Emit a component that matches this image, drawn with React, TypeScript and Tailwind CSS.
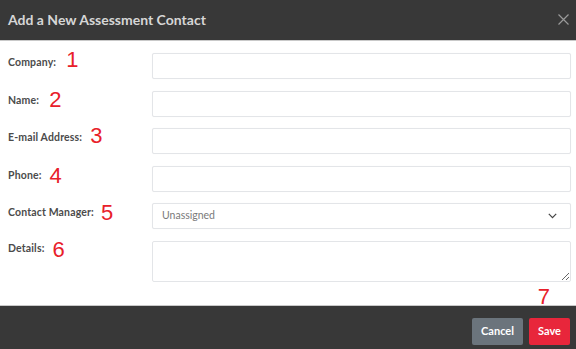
import React from "react";

const numFont = { fontFamily: '"Liberation Sans", Arial, sans-serif' };

const Num = ({ n, className = "" }: { n: string; className?: string }) => (
  <span className={`relative text-[22px] leading-none text-[#e8202a] ${className}`} style={numFont}>
    {n}
  </span>
);

const Label = ({ text, num, numClass = "", ml }: { text: string; num: string; numClass?: string; ml: string }) => (
  <div className="flex items-center h-[26px] -mt-[3px]">
    <span className="text-[10.5px] font-bold text-[#4b4b4b] tracking-[0.15px]">{text}</span>
    <Num n={num} className={`${ml} ${numClass}`} />
  </div>
);

const inputCls =
  "h-[26px] w-full rounded-[2px] border border-[#e3e5e8] bg-white shadow-[0_0_1px_rgba(0,0,0,0.06)] outline-none";

export default function App() {
  return (
    <div className="w-[576px] h-[349px] overflow-hidden bg-white flex flex-col" style={{ fontFamily: 'Lato, "Open Sans", sans-serif' }}>
      <div className="h-[41px] shrink-0 bg-[#383838] border-b border-[#c9c9c9] flex items-center justify-between pl-[8px] pr-[7px]">
        <span className="text-[14px] font-bold text-[#d6d6d6] -mt-[2px]">Add a New Assessment Contact</span>
        <svg width="11" height="11" viewBox="0 0 11 11" className="-mt-[2px]">
          <path d="M0.5 0.5 L10.5 10.5 M10.5 0.5 L0.5 10.5" stroke="#9a9a9a" strokeWidth="1.2" />
        </svg>
      </div>

      <div className="flex-1 grid grid-cols-[144px_1fr] gap-y-[11.5px] pl-[8px] pr-[5px] pt-[12px] content-start">
        <Label text="Company:" num="1" ml="ml-[10px]" numClass="-top-[3px]" />
        <input className={inputCls} />

        <Label text="Name:" num="2" ml="ml-[10px]" numClass="-top-[1px]" />
        <input className={inputCls} />

        <Label text="E-mail Address:" num="3" ml="ml-[8px]" numClass="-top-[2px]" />
        <input className={inputCls} />

        <Label text="Phone:" num="4" ml="ml-[8px]" />
        <input className={inputCls} />

        <Label text="Contact Manager:" num="5" ml="ml-[7px]" />
        <div className={`${inputCls} flex items-center justify-between pl-[9px] pr-[13px]`}>
          <span className="text-[10.5px] text-[#7a7a7a]">Unassigned</span>
          <svg width="9" height="6" viewBox="0 0 9 6">
            <path d="M0.8 0.8 L4.5 4.6 L8.2 0.8" stroke="#444" strokeWidth="1.2" fill="none" />
          </svg>
        </div>

        <div className="flex items-start h-[41px]">
          <div className="flex items-center h-[16px]">
            <span className="text-[10.5px] font-bold text-[#4b4b4b] tracking-[0.15px]">Details:</span>
            <Num n="6" className="ml-[8px] top-[1px]" />
          </div>
        </div>
        <textarea className="h-[41px] w-full rounded-[2px] border border-[#e3e5e8] bg-white outline-none resize-y" />
      </div>

      <div className="relative h-[44px] shrink-0 bg-[#383838] border-t border-[#c9c9c9] flex items-start justify-end gap-[6px] pt-[12px] pr-[6px]">
        <span className="absolute right-[26px] -top-[20px] text-[22px] leading-none text-[#e8202a]" style={numFont}>
          7
        </span>
        <button className="h-[27px] w-[51px] rounded-[2px] bg-[#6b747c] text-white text-[11px] font-bold">Cancel</button>
        <button className="h-[27px] w-[41px] rounded-[2px] bg-[#e8263b] text-white text-[11px] font-bold">Save</button>
      </div>
    </div>
  );
}
